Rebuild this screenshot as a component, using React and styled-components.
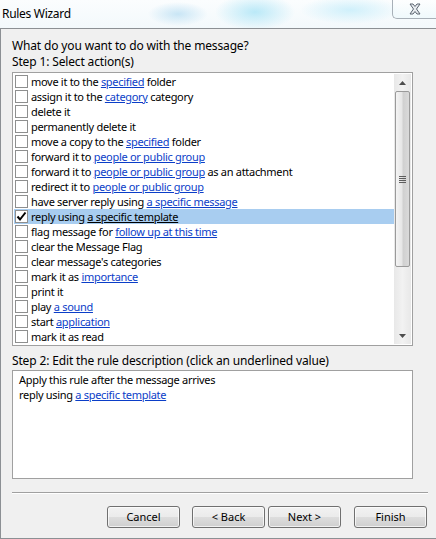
import React from "react"
import styled, { createGlobalStyle } from "styled-components"

const GlobalStyle = createGlobalStyle`
  html, body {
    margin: 0;
    padding: 0;
    background: #f0f0f0;
  }
  body {
    font-family: "Noto Sans", "Open Sans", sans-serif;
    font-size: 12px;
    color: #000;
  }
`

const actions = [
  ["move it to the ", { link: "specified" }, " folder"],
  ["assign it to the ", { link: "category" }, " category"],
  ["delete it"],
  ["permanently delete it"],
  ["move a copy to the ", { link: "specified" }, " folder"],
  ["forward it to ", { link: "people or public group" }],
  ["forward it to ", { link: "people or public group" }, " as an attachment"],
  ["redirect it to ", { link: "people or public group" }],
  ["have server reply using ", { link: "a specific message" }],
  ["reply using ", { link: "a specific template" }],
  ["flag message for ", { link: "follow up at this time" }],
  ["clear the Message Flag"],
  ["clear message's categories"],
  ["mark it as ", { link: "importance" }],
  ["print it"],
  ["play ", { link: "a sound" }],
  ["start ", { link: "application" }],
  ["mark it as read"],
]

const SELECTED = 9

function App() {
  return (
    <>
      <GlobalStyle />
      <Window>
        <TitleBar>
          <Title>Rules Wizard</Title>
          <CloseButton>
            <svg width="14" height="12" viewBox="0 0 14 12">
              <path
                d="M2 1 L5 1 L7 3.5 L9 1 L12 1 L8.5 6 L12 11 L9 11 L7 8.5 L5 11 L2 11 L5.5 6 Z"
                fill="#e8ecf0"
                stroke="#5a6470"
                strokeWidth="1"
                strokeLinejoin="round"
              />
            </svg>
          </CloseButton>
        </TitleBar>
        <Body>
          <Label>What do you want to do with the message?</Label>
          <Label>Step 1: Select action(s)</Label>
          <ListBox>
            <Rows>
              {actions.map((parts, i) => (
                <Row key={i} $selected={i === SELECTED}>
                  <CheckBox>
                    {i === SELECTED && (
                      <svg width="11" height="11" viewBox="0 0 11 11">
                        <path d="M1.5 5.5 L4 8.5 L9.5 1.5" fill="none" stroke="#000" strokeWidth="2" />
                      </svg>
                    )}
                  </CheckBox>
                  <RowText>
                    {parts.map((p, j) =>
                      typeof p === "string" ? (
                        <span key={j}>{p}</span>
                      ) : (
                        <Link key={j} $selected={i === SELECTED}>{p.link}</Link>
                      )
                    )}
                  </RowText>
                </Row>
              ))}
            </Rows>
            <ScrollBar>
              <ArrowBox>
                <svg width="7" height="4" viewBox="0 0 7 4"><path d="M0 4 L3.5 0 L7 4 Z" fill="#4d4d4d" /></svg>
              </ArrowBox>
              <Thumb>
                <Grip>
                  <span />
                  <span />
                  <span />
                  <span />
                </Grip>
              </Thumb>
              <Track />
              <ArrowBox>
                <svg width="7" height="4" viewBox="0 0 7 4"><path d="M0 0 L7 0 L3.5 4 Z" fill="#4d4d4d" /></svg>
              </ArrowBox>
            </ScrollBar>
          </ListBox>
          <Step2Label>Step 2: Edit the rule description (click an underlined value)</Step2Label>
          <DescBox>
            <DescLine>Apply this rule after the message arrives</DescLine>
            <DescLine>
              reply using <Link>a specific template</Link>
            </DescLine>
          </DescBox>
          <Separator />
          <ButtonRow>
            <Button>Cancel</Button>
            <Button $gap={12}>&lt; Back</Button>
            <Button $gap={3}>Next &gt;</Button>
            <Button $gap={13}>Finish</Button>
          </ButtonRow>
        </Body>
      </Window>
    </>
  )
}

export default App

const Window = styled.div`
  width: 436px;
  height: 539px;
  display: flex;
  flex-direction: column;
  overflow: hidden;
`

const TitleBar = styled.div`
  height: 28px;
  flex: none;
  display: flex;
  align-items: flex-start;
  justify-content: space-between;
  border-bottom: 1px solid #8c9094;
  background:
    radial-gradient(ellipse 30px 12px at 178px 14px, rgba(170, 215, 240, 0.6), transparent),
    radial-gradient(ellipse 40px 18px at 255px 12px, rgba(160, 225, 245, 0.7), transparent),
    radial-gradient(ellipse 50px 14px at 350px 10px, rgba(190, 235, 250, 0.7), transparent),
    linear-gradient(180deg, #fbfdfe 0%, #f3f9fc 100%);
`

const Title = styled.div`
  padding: 6px 0 0 2px;
  font-size: 12px;
  letter-spacing: -0.3px;
  line-height: 16px;
  color: #000;
`

const CloseButton = styled.div`
  width: 43px;
  height: 18px;
  display: flex;
  align-items: center;
  justify-content: center;
  border-left: 1px solid #a8b0b8;
  border-bottom: 1px solid #a8b0b8;
  border-bottom-left-radius: 5px;
  background: linear-gradient(180deg, rgba(255, 255, 255, 0.6), rgba(235, 248, 252, 0.6));
`

const Body = styled.div`
  flex: 1;
  display: flex;
  flex-direction: column;
  padding: 9px 0 0 11px;
  background: #f0f0f0;
  border-left: 1px solid #8c9094;
  border-bottom: 1px solid #8c9094;
`

const Label = styled.div`
  line-height: 16px;
  height: 16px;
  letter-spacing: -0.15px;
`

const Step2Label = styled(Label)`
  margin-top: 7px;
`

const ListBox = styled.div`
  margin-top: 2px;
  width: 401px;
  height: 274px;
  box-sizing: border-box;
  border: 1px solid #a0a0a0;
  padding: 1px;
  background: #fff;
  display: flex;
`

const Rows = styled.div`
  flex: 1;
  display: flex;
  flex-direction: column;
`

const Row = styled.div`
  height: 15px;
  display: flex;
  align-items: center;
  padding-left: 1px;
  background: ${(p) => (p.$selected ? "#a8cdf0" : "transparent")};
`

const CheckBox = styled.div`
  width: 13px;
  height: 13px;
  box-sizing: border-box;
  border: 1px solid #8e8f8f;
  background: #fff;
  display: flex;
  align-items: center;
  justify-content: center;
  flex: none;
`

const RowText = styled.div`
  margin-left: 3px;
  font-size: 11px;
  letter-spacing: -0.3px;
  line-height: 15px;
  white-space: nowrap;
`

const Link = styled.span`
  color: ${(p) => (p.$selected ? "#000" : "#0b3ec8")};
  text-decoration: underline;
`

const ScrollBar = styled.div`
  width: 17px;
  flex: none;
  display: flex;
  flex-direction: column;
  background: linear-gradient(90deg, #e8e8e8, #f2f2f2 50%, #e8e8e8);
`

const ArrowBox = styled.div`
  height: 17px;
  display: flex;
  align-items: center;
  justify-content: center;
`

const Thumb = styled.div`
  height: 176px;
  margin: 0 1px;
  box-sizing: border-box;
  border: 1px solid #9a9a9a;
  border-radius: 2px;
  background: linear-gradient(90deg, #f4f4f4 0%, #e6e6e6 45%, #d0d0d0 55%, #dadada 100%);
  display: flex;
  align-items: center;
  justify-content: center;
`

const Grip = styled.div`
  display: flex;
  flex-direction: column;
  gap: 1px;

  span {
    display: block;
    width: 7px;
    height: 1px;
    background: #5c5c5c;
  }
`

const Track = styled.div`
  flex: 1;
`

const DescBox = styled.div`
  margin-top: 1px;
  width: 401px;
  height: 109px;
  box-sizing: border-box;
  border: 1px solid #a0a0a0;
  background: #fff;
  padding: 1px 0 0 6px;
  font-size: 11px;
  letter-spacing: -0.3px;
`

const DescLine = styled.div`
  line-height: 15px;
`

const Separator = styled.div`
  margin-top: 13px;
  width: 416px;
  height: 1px;
  background: #a0a0a0;
  border-bottom: 1px solid #fff;
`

const ButtonRow = styled.div`
  margin-top: 12px;
  width: 415px;
  display: flex;
  justify-content: flex-end;
`

const Button = styled.div`
  width: 73px;
  height: 22px;
  box-sizing: border-box;
  margin-left: ${(p) => p.$gap || 0}px;
  border: 1px solid #707070;
  border-radius: 3px;
  background: linear-gradient(180deg, #f2f2f2 0%, #ebebeb 50%, #dddddd 51%, #cfcfcf 100%);
  box-shadow: inset 0 0 0 1px rgba(255, 255, 255, 0.7);
  display: flex;
  align-items: center;
  justify-content: center;
  font-size: 11px;
  line-height: 16px;
`
